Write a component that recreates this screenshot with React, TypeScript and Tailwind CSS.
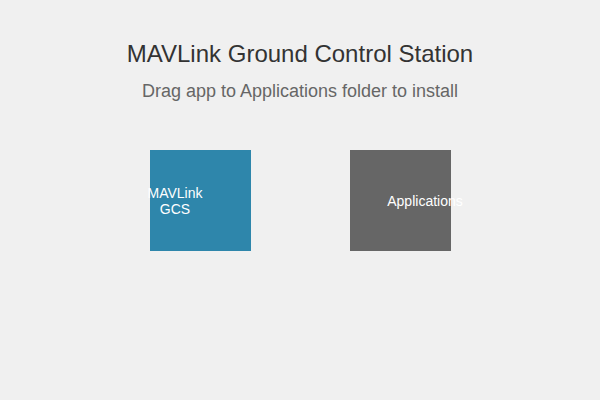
import React from 'react';

// DMG installer background: title, hint, app icon and Applications folder
export default function App() {
  return (
    <div
      className="w-[600px] h-[400px] bg-[#f0f0f0] flex flex-col items-center pt-[40px]"
      style={{ fontFamily: '"Liberation Sans", Arial, sans-serif' }}
    >
      <h1 className="text-[24px] leading-[28px] text-[#333333]">MAVLink Ground Control Station</h1>
      <p className="mt-[13px] text-[18px] leading-[20px] text-[#666666]">
        Drag app to Applications folder to install
      </p>

      <div className="mt-[49px] w-full pl-[150px] flex gap-[99px]">
        {/* app icon */}
        <div className="w-[101px] h-[101px] bg-[#2e86ab] flex justify-start">
          <div className="w-[50px] flex flex-col items-center justify-center text-white text-[14px] leading-[16px] whitespace-nowrap">
            <span>MAVLink</span>
            <span>GCS</span>
          </div>
        </div>

        {/* Applications folder */}
        <div className="w-[101px] h-[101px] bg-[#666666] flex justify-start pl-[50px]">
          <div className="w-[50px] flex flex-col items-center justify-center text-white text-[14px] leading-[16px] whitespace-nowrap">
            <span>Applications</span>
          </div>
        </div>
      </div>
    </div>
  );
}
